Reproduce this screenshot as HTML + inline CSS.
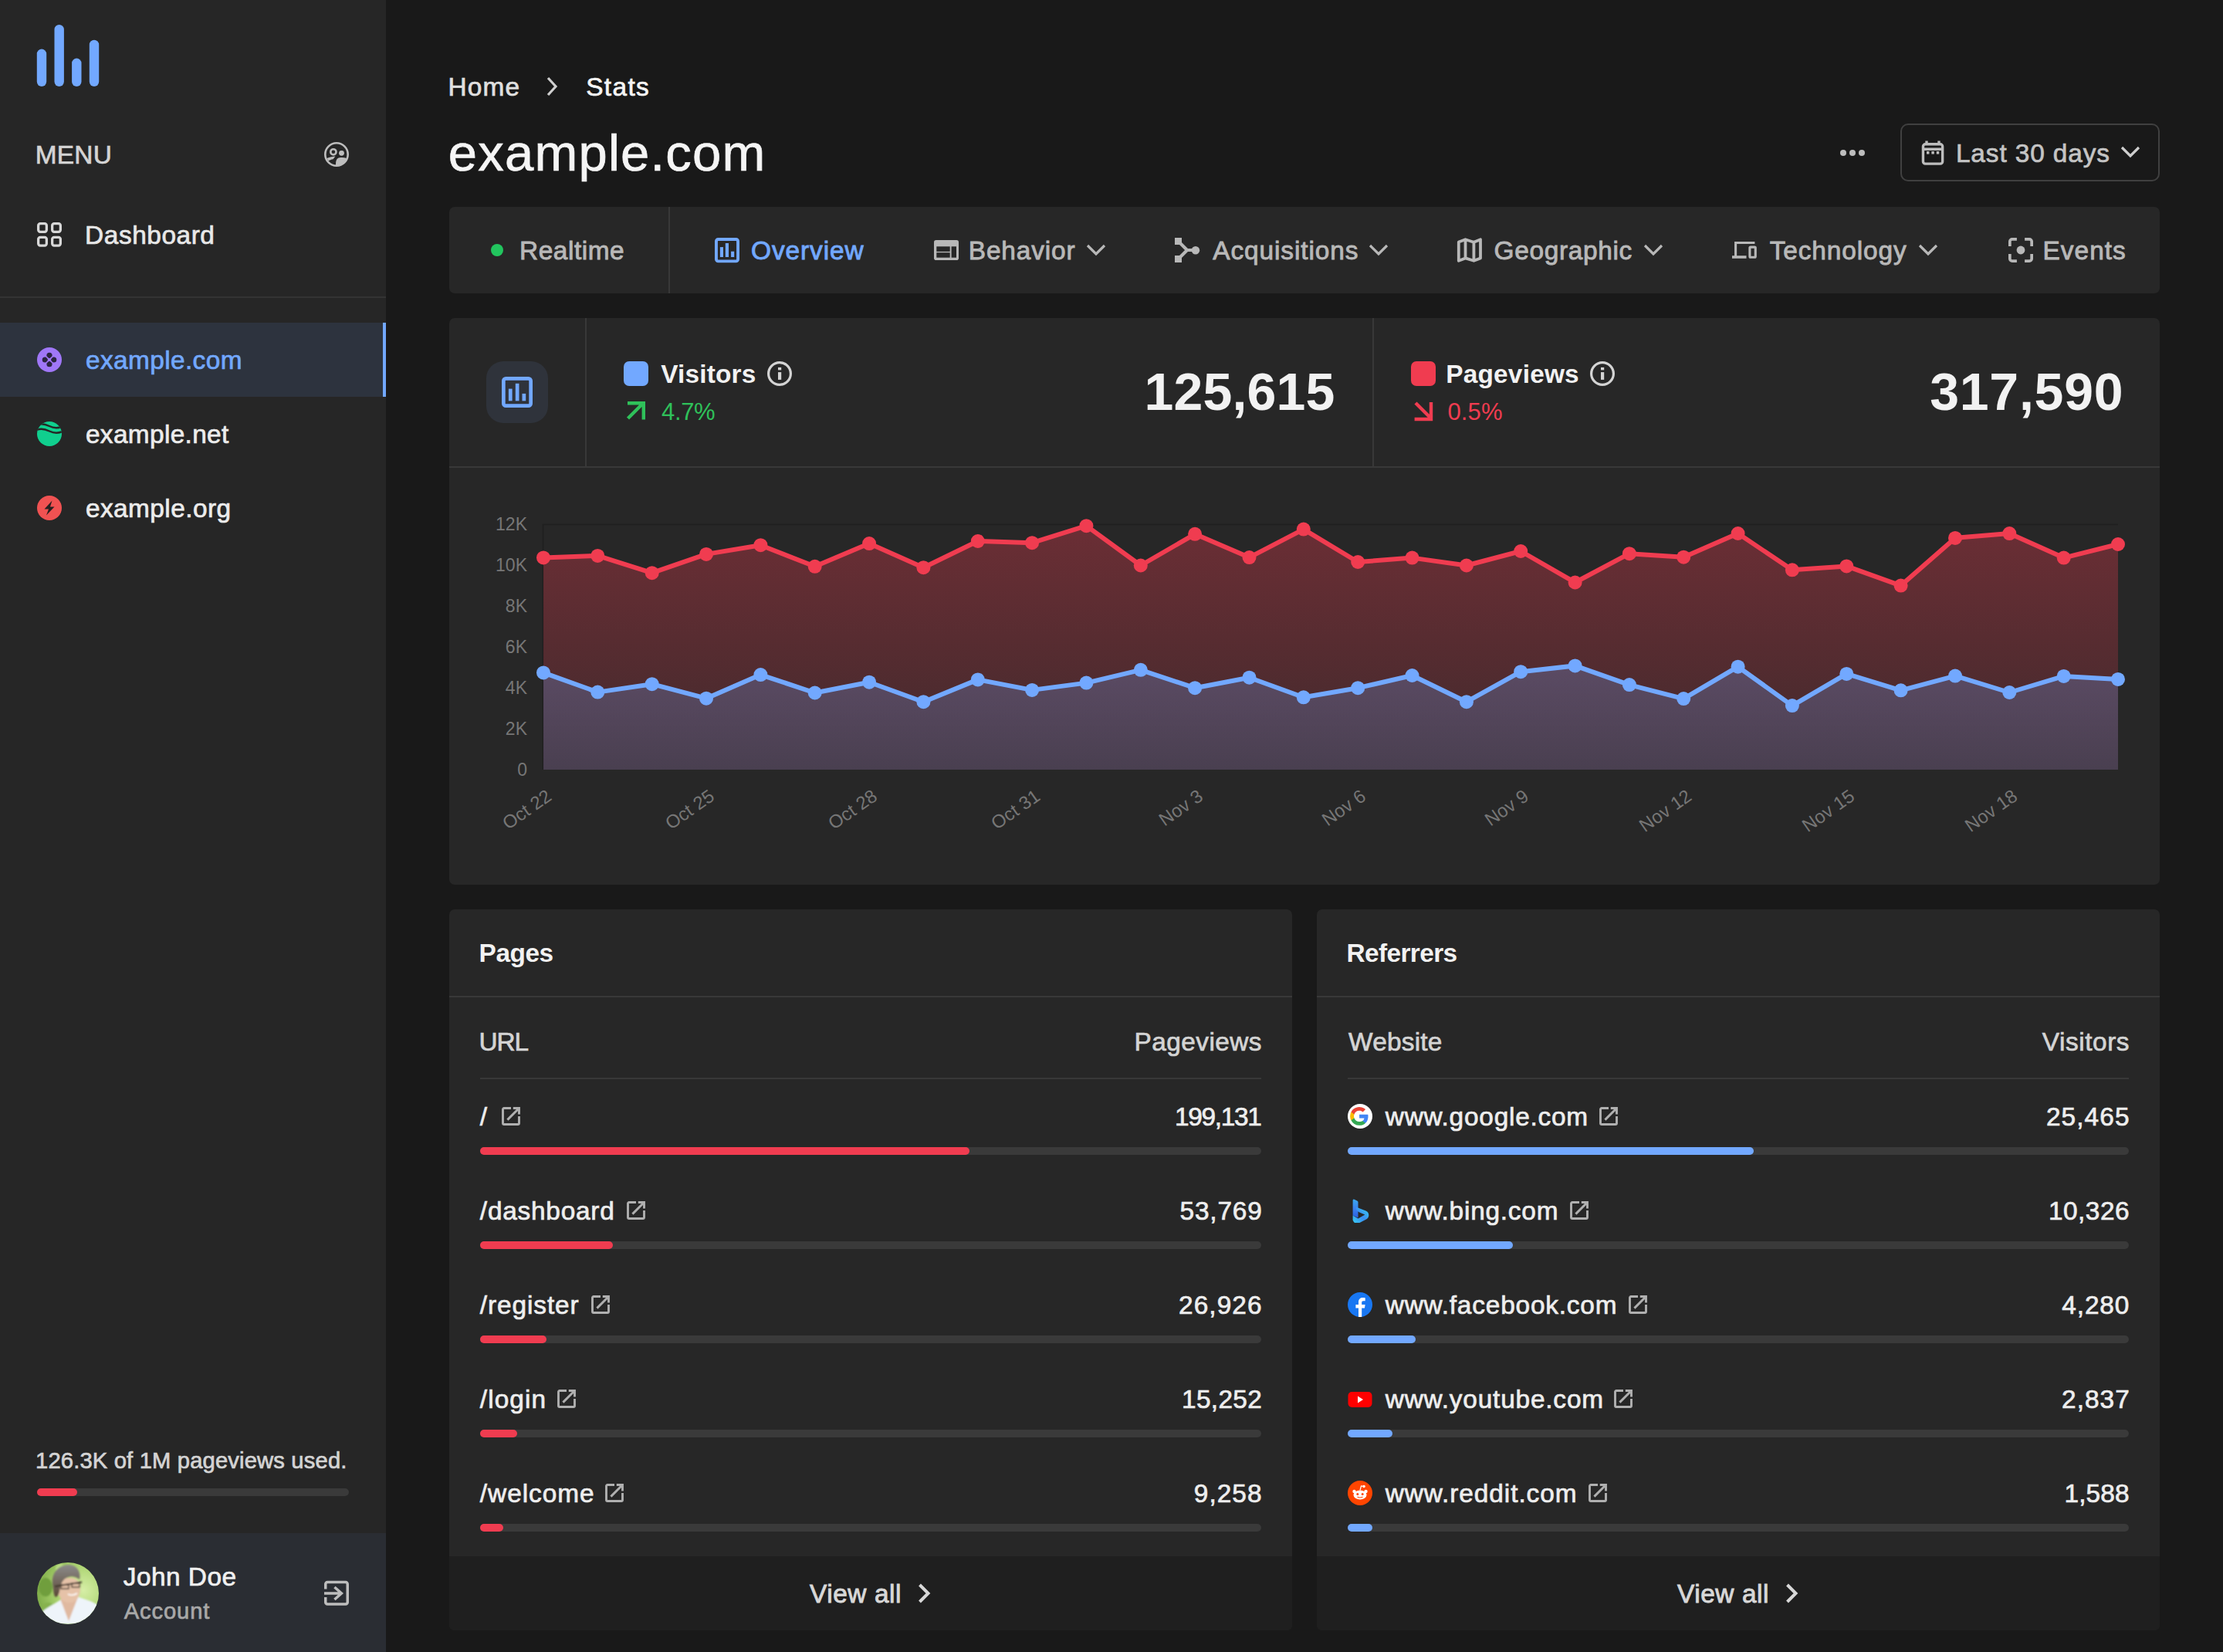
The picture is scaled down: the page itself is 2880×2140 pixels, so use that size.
<!DOCTYPE html><html><head><meta charset="utf-8"><style>
html,body{margin:0;padding:0;width:2880px;height:2140px;overflow:hidden;background:#191919}
.t{position:absolute;white-space:nowrap;font-family:"Liberation Sans",sans-serif}
.r{position:absolute;display:block}
</style></head><body>
<div class="r" style="left:0px;top:0px;width:500px;height:2140px;background:#262626;border-radius:0px;"></div>
<svg class="r" style="left:0px;top:0px" width="160" height="130" viewBox="0 0 160 130"><rect x="47.8" y="63.6" width="12.4" height="48.4" rx="6.2" fill="#72a8ff"/><rect x="70.5" y="31.9" width="12.4" height="80.1" rx="6.2" fill="#72a8ff"/><rect x="93.1" y="75.6" width="12.4" height="36.400000000000006" rx="6.2" fill="#72a8ff"/><rect x="115.8" y="51.8" width="12.4" height="60.2" rx="6.2" fill="#72a8ff"/></svg>
<div class="t" style="left:45.81px;top:183.72px;font-size:33.4px;line-height:33.4px;letter-spacing:0.216px;color:#d4d4d4;-webkit-text-stroke:0.7px #d4d4d4;">MENU</div>
<svg class="r" style="left:418px;top:182px" width="36" height="36" viewBox="0 0 36 36"><g fill="none" stroke="#bdbdbd" stroke-width="2.6"><circle cx="18" cy="18" r="14.7"/><circle cx="13.9" cy="14.8" r="3.6"/></g>
<circle cx="24.5" cy="16.3" r="3.4" fill="#bdbdbd"/><path d="M17 31.5 C17 27 17.5 24.5 19.5 23.2 C22 21.8 27 21.8 31 23 C29.5 28.5 24 32.5 17 32.5 Z" fill="#bdbdbd"/><path d="M5.5 23 C9 21.5 13 20.5 16.5 20.5 L13.5 24.2 C11 24.5 9 25.5 7.5 26.5 Z" fill="#bdbdbd"/></svg>
<svg class="r" style="left:46px;top:286px" width="36" height="36" viewBox="0 0 36 36"><rect x="3.65" y="3.65" width="10.7" height="10.7" rx="2.5" fill="none" stroke="#d8d8d8" stroke-width="3.3"/><rect x="21.65" y="3.65" width="10.7" height="10.7" rx="2.5" fill="none" stroke="#d8d8d8" stroke-width="3.3"/><rect x="3.65" y="21.35" width="10.7" height="10.7" rx="2.5" fill="none" stroke="#d8d8d8" stroke-width="3.3"/><rect x="21.65" y="21.35" width="10.7" height="10.7" rx="2.5" fill="none" stroke="#d8d8d8" stroke-width="3.3"/></svg>
<div class="t" style="left:110.11px;top:288.22px;font-size:33.4px;line-height:33.4px;letter-spacing:0.560px;color:#e8e8e8;-webkit-text-stroke:0.7px #e8e8e8;">Dashboard</div>
<div class="r" style="left:0px;top:384px;width:500px;height:2px;background:#333333;border-radius:0px;"></div>
<div class="r" style="left:0px;top:418px;width:496px;height:96px;background:#2d333e;border-radius:0px;"></div>
<div class="r" style="left:496px;top:418px;width:4px;height:96px;background:#72a8ff;border-radius:0px;"></div>
<svg class="r" style="left:48px;top:450px" width="32" height="32" viewBox="0 0 32 32"><circle cx="16" cy="16" r="16" fill="#a077f7"/><g fill="#2b2540"><circle cx="16" cy="10.3" r="3.6"/><circle cx="16" cy="21.7" r="3.6"/><circle cx="10.3" cy="16" r="3.6"/><circle cx="21.7" cy="16" r="3.6"/></g><path d="M12 12 L20 20 M20 12 L12 20" stroke="#a077f7" stroke-width="1.6"/></svg>
<div class="t" style="left:110.95px;top:449.72px;font-size:33.4px;line-height:33.4px;letter-spacing:0.394px;color:#72a8ff;-webkit-text-stroke:0.7px #72a8ff;">example.com</div>
<svg class="r" style="left:48px;top:546px" width="32" height="32" viewBox="0 0 32 32"><defs><clipPath id="cg"><circle cx="16" cy="16" r="16"/></clipPath></defs><g clip-path="url(#cg)"><rect width="32" height="32" fill="#10cf8e"/><path d="M-2 5 C4 2 10 3 16 6 S28 9 34 6" stroke="#262626" stroke-width="2.4" fill="none"/><path d="M-2 11.5 C4 8.5 10 9.5 16 12.5 S28 15.5 34 12.5" stroke="#262626" stroke-width="2.4" fill="none"/><path d="M-2 -2 L10 -2 C8 0 4 1 -2 3 Z" fill="#262626"/></g></svg>
<div class="t" style="left:110.95px;top:545.72px;font-size:33.4px;line-height:33.4px;letter-spacing:0.347px;color:#ececec;-webkit-text-stroke:0.7px #ececec;">example.net</div>
<svg class="r" style="left:48px;top:642px" width="32" height="32" viewBox="0 0 32 32"><circle cx="16" cy="16" r="16" fill="#f05252"/><path d="M19.5 6.5 L9.5 17.5 L15 17.5 L12 25.5 L22.5 14.5 L17 14.5 Z" fill="#262020"/></svg>
<div class="t" style="left:110.95px;top:641.72px;font-size:33.4px;line-height:33.4px;letter-spacing:0.434px;color:#ececec;-webkit-text-stroke:0.7px #ececec;">example.org</div>
<div class="t" style="left:46.03px;top:1877.78px;font-size:29.2px;line-height:29.2px;letter-spacing:0.157px;color:#d4d4d4;-webkit-text-stroke:0.7px #d4d4d4;">126.3K of 1M pageviews used.</div>
<div class="r" style="left:48px;top:1928px;width:404px;height:10px;background:#3a3a3a;border-radius:5px;"></div>
<div class="r" style="left:48px;top:1928px;width:52px;height:10px;background:#f03c50;border-radius:5px;"></div>
<div class="r" style="left:0px;top:1986px;width:500px;height:154px;background:#2a2d33;border-radius:0px;"></div>
<svg class="r" style="left:48px;top:2024px" width="80" height="80" viewBox="0 0 80 80"><defs><clipPath id="av"><circle cx="40" cy="40" r="40"/></clipPath><radialGradient id="avbg" cx="0.75" cy="0.45" r="0.8"><stop offset="0" stop-color="#d6eea6"/><stop offset="0.55" stop-color="#a9d26e"/><stop offset="1" stop-color="#7aa845"/></radialGradient><linearGradient id="hair" x1="0" y1="0" x2="0" y2="1"><stop offset="0" stop-color="#8c8c8a"/><stop offset="0.6" stop-color="#6f6358"/><stop offset="1" stop-color="#5a4636"/></linearGradient><filter id="avb"><feGaussianBlur stdDeviation="0.8"/></filter></defs>
<g clip-path="url(#av)"><rect width="80" height="80" fill="url(#avbg)"/>
<g filter="url(#avb)"><ellipse cx="11" cy="32" rx="9" ry="12" fill="#6f9e3d"/><ellipse cx="14" cy="58" rx="8" ry="6" fill="#86b24e"/><circle cx="30" cy="8" r="6" fill="#b9dc84"/>
<path d="M2 80 L4 66 C10 60 22 54 31 48 L52 44 C62 48 72 50 80 56 L80 80 Z" fill="#eef4fa"/>
<path d="M30 47 L41 76 L53 45 Z" fill="#e0b9a0"/>
<path d="M27 30 C26 44 32 52 42 52 C51 52 56 44 56 34 C56 24 50 20 42 20 C34 20 28 23 27 30 Z" fill="#e6c2a8"/>
<path d="M20 28 C18 12 30 2 42 3 C52 4 57 12 55 22 C50 18 44 17 38 20 C32 23 30 30 29 38 C27 44 25 46 23 44 C21 40 21 34 20 28 Z" fill="url(#hair)"/>
<path d="M23 31 L58 25.5" stroke="#3a3028" stroke-width="1.8" fill="none"/><path d="M31 29 h10 v5 h-10 z M45 27 h10 v5 h-10 z" fill="none" stroke="#4a3c30" stroke-width="1.3"/>
<path d="M40 41 Q46 44 52 40" stroke="#fff" stroke-width="1.6" fill="none"/></g></g></svg>
<div class="t" style="left:159.75px;top:2026.02px;font-size:33.4px;line-height:33.4px;letter-spacing:0.484px;color:#f0f0f0;-webkit-text-stroke:0.7px #f0f0f0;">John Doe</div>
<div class="t" style="left:160.79px;top:2073.18px;font-size:29.2px;line-height:29.2px;letter-spacing:0.861px;color:#a8a8a8;-webkit-text-stroke:0.7px #a8a8a8;">Account</div>
<svg class="r" style="left:418px;top:2045px" width="36" height="36" viewBox="0 0 36 36"><g fill="none" stroke="#bdbdbd" stroke-width="3.5"><path d="M3.75 13.6 V7 A2.5 2.5 0 0 1 6.25 4.5 H29.75 A2.5 2.5 0 0 1 32.25 7 V30.5 A2.5 2.5 0 0 1 29.75 33 H6.25 A2.5 2.5 0 0 1 3.75 30.5 V24"/><path d="M2 19 H24.5 M15.4 11 L24.4 19 L15.4 27"/></g></svg>
<div class="t" style="left:580.41px;top:95.72px;font-size:33.4px;line-height:33.4px;letter-spacing:1.210px;color:#e0e0e0;-webkit-text-stroke:0.7px #e0e0e0;">Home</div>
<svg class="r" style="left:700px;top:96px" width="30" height="32" viewBox="0 0 30 32"><path d="M10 5 L20 16 L10 27" fill="none" stroke="#cfcfcf" stroke-width="3.2"/></svg>
<div class="t" style="left:759.15px;top:95.72px;font-size:33.4px;line-height:33.4px;letter-spacing:1.372px;color:#f5f5f5;-webkit-text-stroke:0.7px #f5f5f5;">Stats</div>
<div class="t" style="left:580.74px;top:164.27px;font-size:67px;line-height:67px;letter-spacing:1.222px;color:#f5f5f5;-webkit-text-stroke:0.7px #f5f5f5;">example.com</div>
<div class="r" style="left:2384px;top:194px;width:8px;height:8px;background:#bdbdbd;border-radius:4px;"></div>
<div class="r" style="left:2396px;top:194px;width:8px;height:8px;background:#bdbdbd;border-radius:4px;"></div>
<div class="r" style="left:2408px;top:194px;width:8px;height:8px;background:#bdbdbd;border-radius:4px;"></div>
<div class="r" style="left:2462px;top:160px;width:336px;height:75px;background:transparent;border-radius:10px;border:2px solid #404040;box-sizing:border-box;"></div>
<svg class="r" style="left:2486px;top:180px" width="36" height="36" viewBox="0 0 36 36"><g fill="none" stroke="#bdbdbd" stroke-width="3.4"><rect x="5.45" y="6.75" width="25.2" height="25.4" rx="3"/><path d="M5.45 13.3 H30.65 M10 2.5 V7 M26 2.5 V7"/></g><g fill="#bdbdbd"><rect x="10" y="16" width="3.4" height="3.6"/><rect x="16.4" y="16" width="3.4" height="3.6"/><rect x="22.8" y="16" width="3.4" height="3.6"/></g></svg>
<div class="t" style="left:2533.91px;top:182.12px;font-size:33.4px;line-height:33.4px;letter-spacing:0.878px;color:#c4c4c4;-webkit-text-stroke:0.7px #c4c4c4;">Last 30 days</div>
<svg class="r" style="left:2744px;top:186px" width="32" height="24" viewBox="0 0 32 24"><path d="M5 5 L16 16 L27 5" fill="none" stroke="#cfcfcf" stroke-width="3.2"/></svg>
<div class="r" style="left:582px;top:268px;width:2216px;height:112px;background:#272727;border-radius:7px;"></div>
<div class="r" style="left:866px;top:268px;width:2px;height:112px;background:#383838;border-radius:0px;"></div>
<div class="r" style="left:636px;top:316px;width:16px;height:16px;background:#22c55e;border-radius:8px;"></div>
<div class="t" style="left:673.01px;top:308.12px;font-size:33.4px;line-height:33.4px;letter-spacing:0.559px;color:#b8b8b8;-webkit-text-stroke:0.9px #b8b8b8;">Realtime</div>
<svg class="r" style="left:924px;top:306px" width="36" height="36" viewBox="0 0 36 36"><g fill="none" stroke="#72a8ff" stroke-width="3.9"><rect x="3.95" y="3.95" width="28.1" height="28.4" rx="2.5"/></g><g fill="#72a8ff"><rect x="8.9" y="14.1" width="4.1" height="12.9"/><rect x="15.8" y="9" width="4.2" height="18"/><rect x="23.1" y="19.7" width="4.1" height="7.3"/></g></svg>
<div class="t" style="left:972.98px;top:308.12px;font-size:33.4px;line-height:33.4px;letter-spacing:0.942px;color:#72a8ff;-webkit-text-stroke:0.9px #72a8ff;">Overview</div>
<svg class="r" style="left:1210px;top:311px" width="32" height="26" viewBox="0 0 32 26"><rect width="32" height="26" rx="2.8" fill="#b8b8b8"/><g fill="#272727"><rect x="3.3" y="8.3" width="17.4" height="6.6"/><rect x="3.3" y="16.2" width="17.4" height="6.5"/><rect x="22.6" y="8.3" width="6.4" height="14.4"/></g></svg>
<div class="t" style="left:1254.81px;top:308.12px;font-size:33.4px;line-height:33.4px;letter-spacing:0.849px;color:#b8b8b8;-webkit-text-stroke:0.9px #b8b8b8;">Behavior</div>
<svg class="r" style="left:1406px;top:314px" width="28" height="20" viewBox="0 0 28 20"><path d="M3 4 L14 15 L25 4" fill="none" stroke="#b8b8b8" stroke-width="3.2"/></svg>
<svg class="r" style="left:1520px;top:306px" width="36" height="36" viewBox="0 0 36 36"><g fill="#b8b8b8"><rect x="2" y="2" width="9" height="9"/><rect x="2" y="25" width="9" height="9"/><circle cx="28.9" cy="18.2" r="5.3"/></g><path d="M8 8 L18 18 L8 28 M17 18 H26" fill="none" stroke="#b8b8b8" stroke-width="4.2"/></svg>
<div class="t" style="left:1571.28px;top:308.12px;font-size:33.4px;line-height:33.4px;letter-spacing:0.913px;color:#b8b8b8;-webkit-text-stroke:0.9px #b8b8b8;">Acquisitions</div>
<svg class="r" style="left:1772px;top:314px" width="28" height="20" viewBox="0 0 28 20"><path d="M3 4 L14 15 L25 4" fill="none" stroke="#b8b8b8" stroke-width="3.2"/></svg>
<svg class="r" style="left:1886px;top:306px" width="36" height="36" viewBox="0 0 36 36"><path d="M3.8 7.6 L12.5 4.2 L23.4 7.8 L32 4.2 V28.4 L23.4 31.8 L12.5 28.4 L3.8 31.8 Z M12.5 4.2 V28.4 M23.4 7.8 V31.8" fill="none" stroke="#b8b8b8" stroke-width="3.8" stroke-linejoin="round"/></svg>
<div class="t" style="left:1935.48px;top:308.12px;font-size:33.4px;line-height:33.4px;letter-spacing:0.684px;color:#b8b8b8;-webkit-text-stroke:0.9px #b8b8b8;">Geographic</div>
<svg class="r" style="left:2128px;top:314px" width="28" height="20" viewBox="0 0 28 20"><path d="M3 4 L14 15 L25 4" fill="none" stroke="#b8b8b8" stroke-width="3.2"/></svg>
<svg class="r" style="left:2242px;top:306px" width="36" height="36" viewBox="0 0 36 36"><g fill="none" stroke="#b8b8b8" stroke-width="3.1"><path d="M6.6 26 V8.5 H31.4"/><path d="M2 27 H20.5" stroke-width="3.6"/><rect x="24.9" y="14.1" width="7.4" height="13.1" rx="1"/></g></svg>
<div class="t" style="left:2292.72px;top:308.12px;font-size:33.4px;line-height:33.4px;letter-spacing:0.892px;color:#b8b8b8;-webkit-text-stroke:0.9px #b8b8b8;">Technology</div>
<svg class="r" style="left:2484px;top:314px" width="28" height="20" viewBox="0 0 28 20"><path d="M3 4 L14 15 L25 4" fill="none" stroke="#b8b8b8" stroke-width="3.2"/></svg>
<svg class="r" style="left:2600px;top:306px" width="36" height="36" viewBox="0 0 36 36"><g fill="none" stroke="#b8b8b8" stroke-width="3.7"><path d="M3.85 12.9 V6.85 A3 3 0 0 1 6.85 3.85 H12.9 M23.1 3.85 H29.15 A3 3 0 0 1 32.15 6.85 V12.9 M32.15 23.1 V29.15 A3 3 0 0 1 29.15 32.15 H23.1 M12.9 32.15 H6.85 A3 3 0 0 1 3.85 29.15 V23.1"/></g><circle cx="18" cy="18" r="5.4" fill="#b8b8b8"/></svg>
<div class="t" style="left:2646.51px;top:308.12px;font-size:33.4px;line-height:33.4px;letter-spacing:1.047px;color:#b8b8b8;-webkit-text-stroke:0.9px #b8b8b8;">Events</div>
<div class="r" style="left:582px;top:412px;width:2216px;height:734px;background:#272727;border-radius:7px;"></div>
<div class="r" style="left:758px;top:412px;width:2px;height:192px;background:#383838;border-radius:0px;"></div>
<div class="r" style="left:1778px;top:412px;width:2px;height:192px;background:#383838;border-radius:0px;"></div>
<div class="r" style="left:582px;top:604px;width:2216px;height:2px;background:#383838;border-radius:0px;"></div>
<div class="r" style="left:630px;top:468px;width:80px;height:80px;background:#2f333b;border-radius:22px;"></div>
<svg class="r" style="left:648px;top:486px" width="44" height="44" viewBox="0 0 44 44"><rect x="4.35" y="4.35" width="35.3" height="35.3" rx="3" fill="none" stroke="#72a8ff" stroke-width="4.7"/><g fill="#72a8ff"><rect x="10.9" y="17.6" width="4.7" height="15.7"/><rect x="19.8" y="10.8" width="4.7" height="22.5"/><rect x="28.5" y="23.9" width="4.7" height="9.4"/></g></svg>
<div class="r" style="left:808px;top:468px;width:32px;height:32px;background:#72a8ff;border-radius:7px;"></div>
<div class="t" style="left:856.15px;top:467.62px;font-size:33.4px;line-height:33.4px;letter-spacing:0.189px;color:#f2f2f2;font-weight:700;">Visitors</div>
<svg class="r" style="left:994px;top:468px" width="32" height="32" viewBox="0 0 32 32"><circle cx="16" cy="16" r="14.4" fill="none" stroke="#d4d4d4" stroke-width="3.2"/><rect x="14" y="7.9" width="4.2" height="3.5" fill="#d4d4d4"/><rect x="14" y="14.1" width="4.2" height="9.8" fill="#d4d4d4"/></svg>
<svg class="r" style="left:800px;top:510px" width="44" height="44" viewBox="0 0 44 44"><path d="M13.5 32 L33 12.5 M13 12.2 H33.8 V33.5" fill="none" stroke="#2fc15a" stroke-width="4.4"/></svg>
<div class="t" style="left:857.02px;top:518.05px;font-size:31px;line-height:31px;letter-spacing:-0.361px;color:#2fc15a;">4.7%</div>
<div class="t" style="left:1482.43px;top:473.32px;font-size:68px;line-height:68px;letter-spacing:0.189px;color:#f2f2f2;font-weight:700;">125,615</div>
<div class="r" style="left:1828px;top:468px;width:32px;height:32px;background:#f03c50;border-radius:7px;"></div>
<div class="t" style="left:1873.25px;top:467.62px;font-size:33.4px;line-height:33.4px;letter-spacing:0.204px;color:#f2f2f2;font-weight:700;">Pageviews</div>
<svg class="r" style="left:2060px;top:468px" width="32" height="32" viewBox="0 0 32 32"><circle cx="16" cy="16" r="14.4" fill="none" stroke="#d4d4d4" stroke-width="3.2"/><rect x="14" y="7.9" width="4.2" height="3.5" fill="#d4d4d4"/><rect x="14" y="14.1" width="4.2" height="9.8" fill="#d4d4d4"/></svg>
<svg class="r" style="left:1820px;top:510px" width="44" height="44" viewBox="0 0 44 44"><path d="M14 12 L34 32 M34 11 V33 H12.6" fill="none" stroke="#f03c50" stroke-width="4.4"/></svg>
<div class="t" style="left:1875.49px;top:518.05px;font-size:31px;line-height:31px;letter-spacing:0.115px;color:#f03c50;">0.5%</div>
<div class="t" style="left:2500.15px;top:473.32px;font-size:68px;line-height:68px;letter-spacing:0.783px;color:#f2f2f2;font-weight:700;">317,590</div>
<svg class="r" style="left:0;top:0" width="2880" height="1145"><defs>
<linearGradient id="gr" x1="0" y1="679" x2="0" y2="997" gradientUnits="userSpaceOnUse"><stop offset="0" stop-color="#f03c50" stop-opacity="0.34"/><stop offset="1" stop-color="#f03c50" stop-opacity="0.13"/></linearGradient>
<linearGradient id="gb" x1="0" y1="679" x2="0" y2="997" gradientUnits="userSpaceOnUse"><stop offset="0" stop-color="#72a8ff" stop-opacity="0.36"/><stop offset="1" stop-color="#72a8ff" stop-opacity="0.17"/></linearGradient>
</defs><path d="M703.5 997 V679.5 H2744" fill="none" stroke="#1f1f1f" stroke-width="1.5"/><polygon points="704,997 704.0,722.4 774.3,719.9 844.7,742.2 915.0,717.9 985.4,706.2 1055.7,733.8 1126.1,704.1 1196.4,735.2 1266.8,701.0 1337.1,703.2 1407.4,681.2 1477.8,732.5 1548.1,691.8 1618.5,722.1 1688.8,685.6 1759.2,728.0 1829.5,722.6 1899.9,732.5 1970.2,714.0 2040.6,754.5 2110.9,717.2 2181.2,721.7 2251.6,691.0 2321.9,738.3 2392.3,733.4 2462.6,758.6 2533.0,696.9 2603.3,691.1 2673.7,722.6 2744.0,705.0 2744.0,997" fill="url(#gr)"/><polygon points="704,997 704.0,871.4 774.3,896.6 844.7,886.2 915.0,904.7 985.4,874.1 1055.7,897.5 1126.1,883.7 1196.4,909.2 1266.8,880.4 1337.1,893.9 1407.4,884.6 1477.8,867.8 1548.1,891.2 1618.5,877.7 1688.8,903.3 1759.2,891.2 1829.5,875.0 1899.9,909.2 1970.2,870.2 2040.6,862.4 2110.9,887.1 2181.2,905.1 2251.6,863.7 2321.9,914.1 2392.3,872.9 2462.6,894.3 2533.0,875.6 2603.3,897.0 2673.7,875.9 2744.0,879.9 2744.0,997" fill="url(#gb)"/><polyline points="704.0,722.4 774.3,719.9 844.7,742.2 915.0,717.9 985.4,706.2 1055.7,733.8 1126.1,704.1 1196.4,735.2 1266.8,701.0 1337.1,703.2 1407.4,681.2 1477.8,732.5 1548.1,691.8 1618.5,722.1 1688.8,685.6 1759.2,728.0 1829.5,722.6 1899.9,732.5 1970.2,714.0 2040.6,754.5 2110.9,717.2 2181.2,721.7 2251.6,691.0 2321.9,738.3 2392.3,733.4 2462.6,758.6 2533.0,696.9 2603.3,691.1 2673.7,722.6 2744.0,705.0" fill="none" stroke="#f03c50" stroke-width="6" stroke-linejoin="round"/><circle cx="704.0" cy="722.4" r="9" fill="#f03c50"/><circle cx="774.3" cy="719.9" r="9" fill="#f03c50"/><circle cx="844.7" cy="742.2" r="9" fill="#f03c50"/><circle cx="915.0" cy="717.9" r="9" fill="#f03c50"/><circle cx="985.4" cy="706.2" r="9" fill="#f03c50"/><circle cx="1055.7" cy="733.8" r="9" fill="#f03c50"/><circle cx="1126.1" cy="704.1" r="9" fill="#f03c50"/><circle cx="1196.4" cy="735.2" r="9" fill="#f03c50"/><circle cx="1266.8" cy="701.0" r="9" fill="#f03c50"/><circle cx="1337.1" cy="703.2" r="9" fill="#f03c50"/><circle cx="1407.4" cy="681.2" r="9" fill="#f03c50"/><circle cx="1477.8" cy="732.5" r="9" fill="#f03c50"/><circle cx="1548.1" cy="691.8" r="9" fill="#f03c50"/><circle cx="1618.5" cy="722.1" r="9" fill="#f03c50"/><circle cx="1688.8" cy="685.6" r="9" fill="#f03c50"/><circle cx="1759.2" cy="728.0" r="9" fill="#f03c50"/><circle cx="1829.5" cy="722.6" r="9" fill="#f03c50"/><circle cx="1899.9" cy="732.5" r="9" fill="#f03c50"/><circle cx="1970.2" cy="714.0" r="9" fill="#f03c50"/><circle cx="2040.6" cy="754.5" r="9" fill="#f03c50"/><circle cx="2110.9" cy="717.2" r="9" fill="#f03c50"/><circle cx="2181.2" cy="721.7" r="9" fill="#f03c50"/><circle cx="2251.6" cy="691.0" r="9" fill="#f03c50"/><circle cx="2321.9" cy="738.3" r="9" fill="#f03c50"/><circle cx="2392.3" cy="733.4" r="9" fill="#f03c50"/><circle cx="2462.6" cy="758.6" r="9" fill="#f03c50"/><circle cx="2533.0" cy="696.9" r="9" fill="#f03c50"/><circle cx="2603.3" cy="691.1" r="9" fill="#f03c50"/><circle cx="2673.7" cy="722.6" r="9" fill="#f03c50"/><circle cx="2744.0" cy="705.0" r="9" fill="#f03c50"/><polyline points="704.0,871.4 774.3,896.6 844.7,886.2 915.0,904.7 985.4,874.1 1055.7,897.5 1126.1,883.7 1196.4,909.2 1266.8,880.4 1337.1,893.9 1407.4,884.6 1477.8,867.8 1548.1,891.2 1618.5,877.7 1688.8,903.3 1759.2,891.2 1829.5,875.0 1899.9,909.2 1970.2,870.2 2040.6,862.4 2110.9,887.1 2181.2,905.1 2251.6,863.7 2321.9,914.1 2392.3,872.9 2462.6,894.3 2533.0,875.6 2603.3,897.0 2673.7,875.9 2744.0,879.9" fill="none" stroke="#72a8ff" stroke-width="6" stroke-linejoin="round"/><circle cx="704.0" cy="871.4" r="9" fill="#72a8ff"/><circle cx="774.3" cy="896.6" r="9" fill="#72a8ff"/><circle cx="844.7" cy="886.2" r="9" fill="#72a8ff"/><circle cx="915.0" cy="904.7" r="9" fill="#72a8ff"/><circle cx="985.4" cy="874.1" r="9" fill="#72a8ff"/><circle cx="1055.7" cy="897.5" r="9" fill="#72a8ff"/><circle cx="1126.1" cy="883.7" r="9" fill="#72a8ff"/><circle cx="1196.4" cy="909.2" r="9" fill="#72a8ff"/><circle cx="1266.8" cy="880.4" r="9" fill="#72a8ff"/><circle cx="1337.1" cy="893.9" r="9" fill="#72a8ff"/><circle cx="1407.4" cy="884.6" r="9" fill="#72a8ff"/><circle cx="1477.8" cy="867.8" r="9" fill="#72a8ff"/><circle cx="1548.1" cy="891.2" r="9" fill="#72a8ff"/><circle cx="1618.5" cy="877.7" r="9" fill="#72a8ff"/><circle cx="1688.8" cy="903.3" r="9" fill="#72a8ff"/><circle cx="1759.2" cy="891.2" r="9" fill="#72a8ff"/><circle cx="1829.5" cy="875.0" r="9" fill="#72a8ff"/><circle cx="1899.9" cy="909.2" r="9" fill="#72a8ff"/><circle cx="1970.2" cy="870.2" r="9" fill="#72a8ff"/><circle cx="2040.6" cy="862.4" r="9" fill="#72a8ff"/><circle cx="2110.9" cy="887.1" r="9" fill="#72a8ff"/><circle cx="2181.2" cy="905.1" r="9" fill="#72a8ff"/><circle cx="2251.6" cy="863.7" r="9" fill="#72a8ff"/><circle cx="2321.9" cy="914.1" r="9" fill="#72a8ff"/><circle cx="2392.3" cy="872.9" r="9" fill="#72a8ff"/><circle cx="2462.6" cy="894.3" r="9" fill="#72a8ff"/><circle cx="2533.0" cy="875.6" r="9" fill="#72a8ff"/><circle cx="2603.3" cy="897.0" r="9" fill="#72a8ff"/><circle cx="2673.7" cy="875.9" r="9" fill="#72a8ff"/><circle cx="2744.0" cy="879.9" r="9" fill="#72a8ff"/><text x="683" y="687.2" text-anchor="end" font-family="Liberation Sans" font-size="23" fill="#767676">12K</text><text x="683" y="740.2" text-anchor="end" font-family="Liberation Sans" font-size="23" fill="#767676">10K</text><text x="683" y="793.2" text-anchor="end" font-family="Liberation Sans" font-size="23" fill="#767676">8K</text><text x="683" y="846.2" text-anchor="end" font-family="Liberation Sans" font-size="23" fill="#767676">6K</text><text x="683" y="899.2" text-anchor="end" font-family="Liberation Sans" font-size="23" fill="#767676">4K</text><text x="683" y="952.2" text-anchor="end" font-family="Liberation Sans" font-size="23" fill="#767676">2K</text><text x="683" y="1005.2" text-anchor="end" font-family="Liberation Sans" font-size="23" fill="#767676">0</text><text transform="translate(711.5,1028.5) rotate(-35)" text-anchor="end" dy="8" font-family="Liberation Sans" font-size="24" fill="#767676">Oct 22</text><text transform="translate(922.5,1028.5) rotate(-35)" text-anchor="end" dy="8" font-family="Liberation Sans" font-size="24" fill="#767676">Oct 25</text><text transform="translate(1133.6,1028.5) rotate(-35)" text-anchor="end" dy="8" font-family="Liberation Sans" font-size="24" fill="#767676">Oct 28</text><text transform="translate(1344.6,1028.5) rotate(-35)" text-anchor="end" dy="8" font-family="Liberation Sans" font-size="24" fill="#767676">Oct 31</text><text transform="translate(1555.6,1028.5) rotate(-35)" text-anchor="end" dy="8" font-family="Liberation Sans" font-size="24" fill="#767676">Nov 3</text><text transform="translate(1766.7,1028.5) rotate(-35)" text-anchor="end" dy="8" font-family="Liberation Sans" font-size="24" fill="#767676">Nov 6</text><text transform="translate(1977.7,1028.5) rotate(-35)" text-anchor="end" dy="8" font-family="Liberation Sans" font-size="24" fill="#767676">Nov 9</text><text transform="translate(2188.7,1028.5) rotate(-35)" text-anchor="end" dy="8" font-family="Liberation Sans" font-size="24" fill="#767676">Nov 12</text><text transform="translate(2399.8,1028.5) rotate(-35)" text-anchor="end" dy="8" font-family="Liberation Sans" font-size="24" fill="#767676">Nov 15</text><text transform="translate(2610.8,1028.5) rotate(-35)" text-anchor="end" dy="8" font-family="Liberation Sans" font-size="24" fill="#767676">Nov 18</text></svg>
<div class="r" style="left:582px;top:1178px;width:1092px;height:934px;background:#272727;border-radius:7px;overflow:hidden;"></div>
<div class="r" style="left:582px;top:2016px;width:1092px;height:96px;background:#1f1f1f;border-radius:0px;border-radius:0 0 7px 7px;"></div>
<div class="r" style="left:582px;top:1290px;width:1092px;height:2px;background:#383838;border-radius:0px;"></div>
<div class="t" style="left:620.55px;top:1218.22px;font-size:33.4px;line-height:33.4px;letter-spacing:-0.439px;color:#f2f2f2;font-weight:700;">Pages</div>
<div class="t" style="left:620.58px;top:1332.52px;font-size:33.4px;line-height:33.4px;letter-spacing:-1.213px;color:#d4d4d4;-webkit-text-stroke:0.7px #d4d4d4;">URL</div>
<div class="t" style="left:1469.51px;top:1332.62px;font-size:33.4px;line-height:33.4px;letter-spacing:0.440px;color:#d4d4d4;-webkit-text-stroke:0.7px #d4d4d4;">Pageviews</div>
<div class="r" style="left:622px;top:1396px;width:1012px;height:2px;background:#383838;border-radius:0px;"></div>
<div class="t" style="left:621.85px;top:1430.02px;font-size:33.4px;line-height:33.4px;letter-spacing:0.000px;color:#eeeeee;-webkit-text-stroke:0.7px #eeeeee;">/</div>
<svg class="r" style="left:649px;top:1433px" width="26" height="26" viewBox="0 0 26 26"><g transform="translate(1,1)" fill="none" stroke="#b0b0b0" stroke-width="2.9"><path d="M12 1.5 H3 A1.5 1.5 0 0 0 1.5 3 V21 A1.5 1.5 0 0 0 3 22.5 H21 A1.5 1.5 0 0 0 22.5 21 V12"/><path d="M7.4 16.6 L21.5 2.5 M14.8 1.5 H22.5 V9.4"/></g></svg>
<div class="t" style="left:1522.11px;top:1430.02px;font-size:33.4px;line-height:33.4px;letter-spacing:-1.350px;color:#eeeeee;-webkit-text-stroke:0.7px #eeeeee;">199,131</div>
<div class="r" style="left:622px;top:1486px;width:1012px;height:10px;background:#3a3a3a;border-radius:5px;"></div>
<div class="r" style="left:622px;top:1486px;width:634px;height:10px;background:#f03c50;border-radius:5px;"></div>
<div class="t" style="left:621.85px;top:1552.02px;font-size:33.4px;line-height:33.4px;letter-spacing:0.767px;color:#eeeeee;-webkit-text-stroke:0.7px #eeeeee;">/dashboard</div>
<svg class="r" style="left:811px;top:1555px" width="26" height="26" viewBox="0 0 26 26"><g transform="translate(1,1)" fill="none" stroke="#b0b0b0" stroke-width="2.9"><path d="M12 1.5 H3 A1.5 1.5 0 0 0 1.5 3 V21 A1.5 1.5 0 0 0 3 22.5 H21 A1.5 1.5 0 0 0 22.5 21 V12"/><path d="M7.4 16.6 L21.5 2.5 M14.8 1.5 H22.5 V9.4"/></g></svg>
<div class="t" style="left:1528.61px;top:1552.02px;font-size:33.4px;line-height:33.4px;letter-spacing:0.794px;color:#eeeeee;-webkit-text-stroke:0.7px #eeeeee;">53,769</div>
<div class="r" style="left:622px;top:1608px;width:1012px;height:10px;background:#3a3a3a;border-radius:5px;"></div>
<div class="r" style="left:622px;top:1608px;width:172px;height:10px;background:#f03c50;border-radius:5px;"></div>
<div class="t" style="left:621.85px;top:1674.02px;font-size:33.4px;line-height:33.4px;letter-spacing:0.899px;color:#eeeeee;-webkit-text-stroke:0.7px #eeeeee;">/register</div>
<svg class="r" style="left:765px;top:1677px" width="26" height="26" viewBox="0 0 26 26"><g transform="translate(1,1)" fill="none" stroke="#b0b0b0" stroke-width="2.9"><path d="M12 1.5 H3 A1.5 1.5 0 0 0 1.5 3 V21 A1.5 1.5 0 0 0 3 22.5 H21 A1.5 1.5 0 0 0 22.5 21 V12"/><path d="M7.4 16.6 L21.5 2.5 M14.8 1.5 H22.5 V9.4"/></g></svg>
<div class="t" style="left:1526.98px;top:1674.02px;font-size:33.4px;line-height:33.4px;letter-spacing:1.094px;color:#eeeeee;-webkit-text-stroke:0.7px #eeeeee;">26,926</div>
<div class="r" style="left:622px;top:1730px;width:1012px;height:10px;background:#3a3a3a;border-radius:5px;"></div>
<div class="r" style="left:622px;top:1730px;width:86px;height:10px;background:#f03c50;border-radius:5px;"></div>
<div class="t" style="left:621.85px;top:1796.02px;font-size:33.4px;line-height:33.4px;letter-spacing:1.082px;color:#eeeeee;-webkit-text-stroke:0.7px #eeeeee;">/login</div>
<svg class="r" style="left:721px;top:1799px" width="26" height="26" viewBox="0 0 26 26"><g transform="translate(1,1)" fill="none" stroke="#b0b0b0" stroke-width="2.9"><path d="M12 1.5 H3 A1.5 1.5 0 0 0 1.5 3 V21 A1.5 1.5 0 0 0 3 22.5 H21 A1.5 1.5 0 0 0 22.5 21 V12"/><path d="M7.4 16.6 L21.5 2.5 M14.8 1.5 H22.5 V9.4"/></g></svg>
<div class="t" style="left:1531.01px;top:1796.02px;font-size:33.4px;line-height:33.4px;letter-spacing:0.334px;color:#eeeeee;-webkit-text-stroke:0.7px #eeeeee;">15,252</div>
<div class="r" style="left:622px;top:1852px;width:1012px;height:10px;background:#3a3a3a;border-radius:5px;"></div>
<div class="r" style="left:622px;top:1852px;width:48px;height:10px;background:#f03c50;border-radius:5px;"></div>
<div class="t" style="left:621.85px;top:1918.02px;font-size:33.4px;line-height:33.4px;letter-spacing:0.955px;color:#eeeeee;-webkit-text-stroke:0.7px #eeeeee;">/welcome</div>
<svg class="r" style="left:783px;top:1921px" width="26" height="26" viewBox="0 0 26 26"><g transform="translate(1,1)" fill="none" stroke="#b0b0b0" stroke-width="2.9"><path d="M12 1.5 H3 A1.5 1.5 0 0 0 1.5 3 V21 A1.5 1.5 0 0 0 3 22.5 H21 A1.5 1.5 0 0 0 22.5 21 V12"/><path d="M7.4 16.6 L21.5 2.5 M14.8 1.5 H22.5 V9.4"/></g></svg>
<div class="t" style="left:1546.81px;top:1918.02px;font-size:33.4px;line-height:33.4px;letter-spacing:1.051px;color:#eeeeee;-webkit-text-stroke:0.7px #eeeeee;">9,258</div>
<div class="r" style="left:622px;top:1974px;width:1012px;height:10px;background:#3a3a3a;border-radius:5px;"></div>
<div class="r" style="left:622px;top:1974px;width:30px;height:10px;background:#f03c50;border-radius:5px;"></div>
<div class="t" style="left:1048.92px;top:2047.92px;font-size:33.4px;line-height:33.4px;letter-spacing:0.592px;color:#d8d8d8;-webkit-text-stroke:0.9px #d8d8d8;">View all</div>
<svg class="r" style="left:1186.5px;top:2048px" width="28" height="32" viewBox="0 0 28 32"><path d="M4.5 5 L15.5 16 L4.5 27" fill="none" stroke="#d8d8d8" stroke-width="4"/></svg>
<div class="r" style="left:1706px;top:1178px;width:1092px;height:934px;background:#272727;border-radius:7px;overflow:hidden;"></div>
<div class="r" style="left:1706px;top:2016px;width:1092px;height:96px;background:#1f1f1f;border-radius:0px;border-radius:0 0 7px 7px;"></div>
<div class="r" style="left:1706px;top:1290px;width:1092px;height:2px;background:#383838;border-radius:0px;"></div>
<div class="t" style="left:1744.55px;top:1218.22px;font-size:33.4px;line-height:33.4px;letter-spacing:-0.611px;color:#f2f2f2;font-weight:700;">Referrers</div>
<div class="t" style="left:1747.02px;top:1332.52px;font-size:33.4px;line-height:33.4px;letter-spacing:0.227px;color:#d4d4d4;-webkit-text-stroke:0.7px #d4d4d4;">Website</div>
<div class="t" style="left:2645.82px;top:1332.62px;font-size:33.4px;line-height:33.4px;letter-spacing:0.550px;color:#d4d4d4;-webkit-text-stroke:0.7px #d4d4d4;">Visitors</div>
<div class="r" style="left:1746px;top:1396px;width:1012px;height:2px;background:#383838;border-radius:0px;"></div>
<svg class="r" style="left:1746px;top:1430px" width="32" height="32" viewBox="0 0 32 32"><circle cx="16" cy="16" r="16" fill="#fff"/>
<g transform="translate(2.6,3.4) scale(1.04)"><path d="M23 12.3c0-.8-.1-1.6-.2-2.3H12v4.4h6.2a5.3 5.3 0 0 1-2.3 3.5v2.9h3.7c2.2-2 3.4-5 3.4-8.5z" fill="#4285F4"/><path d="M12 23.5c3.1 0 5.7-1 7.6-2.8l-3.7-2.9c-1 .7-2.3 1.1-3.9 1.1-3 0-5.5-2-6.4-4.7H1.8v3A11.5 11.5 0 0 0 12 23.5z" fill="#34A853"/><path d="M5.6 14.2a6.9 6.9 0 0 1 0-4.4v-3H1.8a11.5 11.5 0 0 0 0 10.4z" fill="#FBBC05"/><path d="M12 5.1c1.7 0 3.2.6 4.4 1.7l3.3-3.3A11.5 11.5 0 0 0 1.8 6.8l3.8 3A6.9 6.9 0 0 1 12 5.1z" fill="#EA4335"/></g></svg>
<div class="t" style="left:1794.75px;top:1430.02px;font-size:33.4px;line-height:33.4px;letter-spacing:0.772px;color:#eeeeee;-webkit-text-stroke:0.7px #eeeeee;">www.google.com</div>
<svg class="r" style="left:2071px;top:1433px" width="26" height="26" viewBox="0 0 26 26"><g transform="translate(1,1)" fill="none" stroke="#b0b0b0" stroke-width="2.9"><path d="M12 1.5 H3 A1.5 1.5 0 0 0 1.5 3 V21 A1.5 1.5 0 0 0 3 22.5 H21 A1.5 1.5 0 0 0 22.5 21 V12"/><path d="M7.4 16.6 L21.5 2.5 M14.8 1.5 H22.5 V9.4"/></g></svg>
<div class="t" style="left:2650.88px;top:1430.02px;font-size:33.4px;line-height:33.4px;letter-spacing:1.100px;color:#eeeeee;-webkit-text-stroke:0.7px #eeeeee;">25,465</div>
<div class="r" style="left:1746px;top:1486px;width:1012px;height:10px;background:#3a3a3a;border-radius:5px;"></div>
<div class="r" style="left:1746px;top:1486px;width:526px;height:10px;background:#72a8ff;border-radius:5px;"></div>
<svg class="r" style="left:1746px;top:1552px" width="32" height="32" viewBox="0 0 32 32"><defs><linearGradient id="bg1" x1="0" y1="0" x2="0" y2="1"><stop offset="0" stop-color="#3aa8f0"/><stop offset="0.5" stop-color="#3b82f0"/><stop offset="1" stop-color="#2a5fe0"/></linearGradient><linearGradient id="bg2" x1="0" y1="1" x2="1" y2="0"><stop offset="0" stop-color="#36d0f5"/><stop offset="0.5" stop-color="#3b8cf0"/><stop offset="1" stop-color="#36d2f2"/></linearGradient></defs>
<path d="M6.6 3.2 Q6.6 1 8.6 1.8 L12.2 3.4 Q13.5 4 13.5 5.5 V25.5 L6.6 22.5 Z" fill="url(#bg1)"/>
<path d="M10.8 13.6 Q10.6 11.6 12.6 12.3 L23.5 16.4 Q27.4 18.2 27.3 22.5 Q27.2 25.8 23.6 27.8 L14.8 32.3 Q9 34.5 6.6 28.5 V22.5 L13.5 26.5 L22.3 21.4 L15.2 18.4 Q12.3 17 11.6 15.5 Z" fill="url(#bg2)"/></svg>
<div class="t" style="left:1794.75px;top:1552.02px;font-size:33.4px;line-height:33.4px;letter-spacing:0.770px;color:#eeeeee;-webkit-text-stroke:0.7px #eeeeee;">www.bing.com</div>
<svg class="r" style="left:2033px;top:1555px" width="26" height="26" viewBox="0 0 26 26"><g transform="translate(1,1)" fill="none" stroke="#b0b0b0" stroke-width="2.9"><path d="M12 1.5 H3 A1.5 1.5 0 0 0 1.5 3 V21 A1.5 1.5 0 0 0 3 22.5 H21 A1.5 1.5 0 0 0 22.5 21 V12"/><path d="M7.4 16.6 L21.5 2.5 M14.8 1.5 H22.5 V9.4"/></g></svg>
<div class="t" style="left:2653.91px;top:1552.02px;font-size:33.4px;line-height:33.4px;letter-spacing:0.507px;color:#eeeeee;-webkit-text-stroke:0.7px #eeeeee;">10,326</div>
<div class="r" style="left:1746px;top:1608px;width:1012px;height:10px;background:#3a3a3a;border-radius:5px;"></div>
<div class="r" style="left:1746px;top:1608px;width:214px;height:10px;background:#72a8ff;border-radius:5px;"></div>
<svg class="r" style="left:1746px;top:1674px" width="32" height="32" viewBox="0 0 32 32"><circle cx="16" cy="16" r="16" fill="#1877f2"/><path d="M18.2 32 V20.5 H22 L22.6 16 H18.2 V13.3 C18.2 12 18.6 11.2 20.4 11.2 H22.7 V7.2 C22.3 7.1 21 7 19.5 7 C16.3 7 14 9 14 12.6 V16 H10.4 V20.5 H14 V32 Z" fill="#fff"/></svg>
<div class="t" style="left:1794.75px;top:1674.02px;font-size:33.4px;line-height:33.4px;letter-spacing:0.811px;color:#eeeeee;-webkit-text-stroke:0.7px #eeeeee;">www.facebook.com</div>
<svg class="r" style="left:2109px;top:1677px" width="26" height="26" viewBox="0 0 26 26"><g transform="translate(1,1)" fill="none" stroke="#b0b0b0" stroke-width="2.9"><path d="M12 1.5 H3 A1.5 1.5 0 0 0 1.5 3 V21 A1.5 1.5 0 0 0 3 22.5 H21 A1.5 1.5 0 0 0 22.5 21 V12"/><path d="M7.4 16.6 L21.5 2.5 M14.8 1.5 H22.5 V9.4"/></g></svg>
<div class="t" style="left:2671.22px;top:1674.02px;font-size:33.4px;line-height:33.4px;letter-spacing:0.909px;color:#eeeeee;-webkit-text-stroke:0.7px #eeeeee;">4,280</div>
<div class="r" style="left:1746px;top:1730px;width:1012px;height:10px;background:#3a3a3a;border-radius:5px;"></div>
<div class="r" style="left:1746px;top:1730px;width:88px;height:10px;background:#72a8ff;border-radius:5px;"></div>
<svg class="r" style="left:1746px;top:1796px" width="32" height="32" viewBox="0 0 32 32"><rect x="0.5" y="7" width="31" height="20" rx="5" fill="#f00"/><path d="M13 12.5 L20 17 L13 21.5 Z" fill="#fff"/></svg>
<div class="t" style="left:1794.75px;top:1796.02px;font-size:33.4px;line-height:33.4px;letter-spacing:0.812px;color:#eeeeee;-webkit-text-stroke:0.7px #eeeeee;">www.youtube.com</div>
<svg class="r" style="left:2090px;top:1799px" width="26" height="26" viewBox="0 0 26 26"><g transform="translate(1,1)" fill="none" stroke="#b0b0b0" stroke-width="2.9"><path d="M12 1.5 H3 A1.5 1.5 0 0 0 1.5 3 V21 A1.5 1.5 0 0 0 3 22.5 H21 A1.5 1.5 0 0 0 22.5 21 V12"/><path d="M7.4 16.6 L21.5 2.5 M14.8 1.5 H22.5 V9.4"/></g></svg>
<div class="t" style="left:2671.08px;top:1796.02px;font-size:33.4px;line-height:33.4px;letter-spacing:1.043px;color:#eeeeee;-webkit-text-stroke:0.7px #eeeeee;">2,837</div>
<div class="r" style="left:1746px;top:1852px;width:1012px;height:10px;background:#3a3a3a;border-radius:5px;"></div>
<div class="r" style="left:1746px;top:1852px;width:58px;height:10px;background:#72a8ff;border-radius:5px;"></div>
<svg class="r" style="left:1746px;top:1918px" width="32" height="32" viewBox="0 0 32 32"><circle cx="16" cy="16" r="16" fill="#ff4500"/><ellipse cx="16" cy="18.5" rx="8.5" ry="6" fill="#fff"/><circle cx="23.5" cy="14" r="2.2" fill="#fff"/><circle cx="8.5" cy="14" r="2.2" fill="#fff"/><circle cx="21" cy="7.5" r="1.8" fill="#fff"/><path d="M16 12.5 L17.5 7 L21 7.5" stroke="#fff" stroke-width="1.2" fill="none"/><circle cx="12.8" cy="17.5" r="1.5" fill="#ff4500"/><circle cx="19.2" cy="17.5" r="1.5" fill="#ff4500"/><path d="M12.5 21 Q16 23 19.5 21" stroke="#ff4500" stroke-width="1.1" fill="none"/></svg>
<div class="t" style="left:1794.75px;top:1918.02px;font-size:33.4px;line-height:33.4px;letter-spacing:0.936px;color:#eeeeee;-webkit-text-stroke:0.7px #eeeeee;">www.reddit.com</div>
<svg class="r" style="left:2057px;top:1921px" width="26" height="26" viewBox="0 0 26 26"><g transform="translate(1,1)" fill="none" stroke="#b0b0b0" stroke-width="2.9"><path d="M12 1.5 H3 A1.5 1.5 0 0 0 1.5 3 V21 A1.5 1.5 0 0 0 3 22.5 H21 A1.5 1.5 0 0 0 22.5 21 V12"/><path d="M7.4 16.6 L21.5 2.5 M14.8 1.5 H22.5 V9.4"/></g></svg>
<div class="t" style="left:2674.41px;top:1918.02px;font-size:33.4px;line-height:33.4px;letter-spacing:0.152px;color:#eeeeee;-webkit-text-stroke:0.7px #eeeeee;">1,588</div>
<div class="r" style="left:1746px;top:1974px;width:1012px;height:10px;background:#3a3a3a;border-radius:5px;"></div>
<div class="r" style="left:1746px;top:1974px;width:32px;height:10px;background:#72a8ff;border-radius:5px;"></div>
<div class="t" style="left:2172.92px;top:2047.92px;font-size:33.4px;line-height:33.4px;letter-spacing:0.592px;color:#d8d8d8;-webkit-text-stroke:0.9px #d8d8d8;">View all</div>
<svg class="r" style="left:2310.5px;top:2048px" width="28" height="32" viewBox="0 0 28 32"><path d="M4.5 5 L15.5 16 L4.5 27" fill="none" stroke="#d8d8d8" stroke-width="4"/></svg>
<script>(function(){var w=window.innerWidth;if(w&&Math.abs(w-2880)>2){document.documentElement.style.zoom=(w/2880);}})();</script>
</body></html>
